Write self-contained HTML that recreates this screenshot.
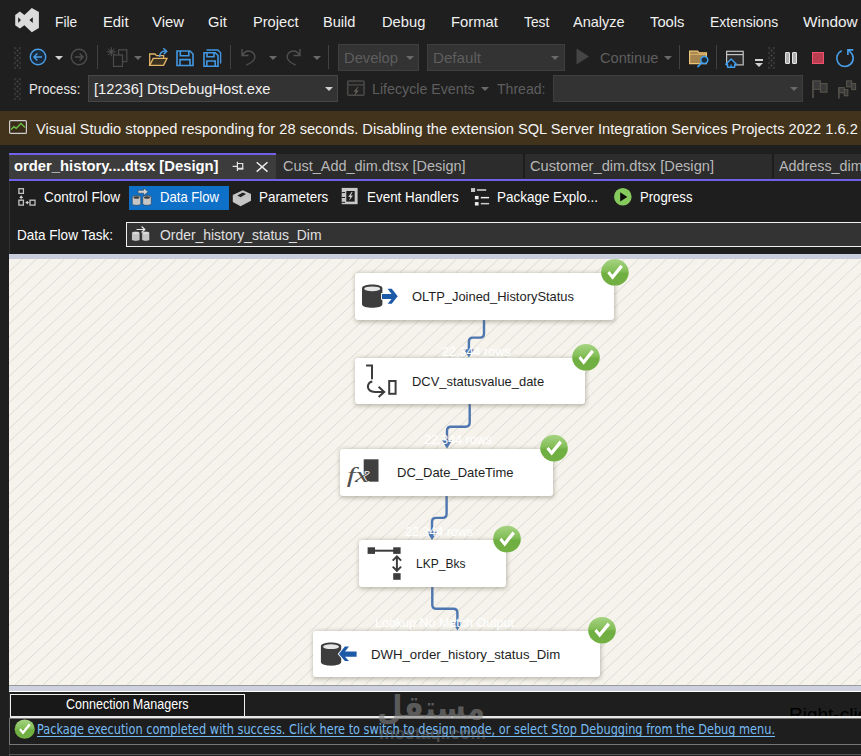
<!DOCTYPE html>
<html lang="en"><head><meta charset="utf-8"><title>order_history_status_Dim.dtsx [Design]</title>
<style>
*{box-sizing:border-box;margin:0;padding:0}
html,body{width:861px;height:756px;overflow:hidden;background:#1f1f1f;font-family:"Liberation Sans",sans-serif}
#app{position:relative;width:861px;height:756px;overflow:hidden;background:#1f1f1f}
.a{position:absolute}
.t{position:absolute;white-space:nowrap;transform-origin:0 50%;display:block}
.sep{position:absolute;width:1px;background:#424242}
.combo{position:absolute;background:#333333;border:1px solid #3f3f3f}
.arr{position:absolute;width:0;height:0;border-left:4px solid transparent;border-right:4px solid transparent;border-top:4px solid #d0d0d0}
.arr.d{border-top-color:#696969}
.grip{position:absolute;width:7px;background-image:radial-gradient(circle,#505050 0.75px,transparent 1.15px),radial-gradient(circle,#505050 0.75px,transparent 1.15px);background-size:5px 5px;background-position:-1.5px -1.5px,1px 1px}
.node{position:absolute;background:#fff;border-radius:3px;box-shadow:0.5px 1px 4px 0.5px rgba(110,105,90,.42)}
svg{position:absolute;overflow:visible}
</style></head><body><div id="app">

<!-- ===== menu bar ===== -->
<svg style="left:0;top:0" width="48" height="40" viewBox="0 0 48 40"><path fill="#dbdbdb" fill-rule="evenodd" d="M15.200 14.900L19.900 11.500L24.400 14.900L31.800 8L38.900 12V28L31.800 32.200L24.400 25.300L19.900 28.400L15.200 25.300Z M18.200 17.200V23L20.900 20.100Z M32.800 17.200V23L29.400 20.100Z"/></svg>

<!-- ===== toolbar row 1 ===== -->
<div class="grip" style="left:14px;top:47px;height:22px"></div>
<svg style="left:28.500px;top:47.600px" width="18" height="18" viewBox="0 0 18 18"><circle cx="9" cy="9" r="7.7" fill="#1b2a3a" stroke="#4a9ee8" stroke-width="1.4"/><path d="M13 9H5.2M8.4 5.6L5 9l3.4 3.4" fill="none" stroke="#4a9ee8" stroke-width="1.4"/></svg>
<div class="arr" style="left:55px;top:56px"></div>
<svg style="left:69.500px;top:48px" width="18" height="18" viewBox="0 0 18 18"><circle cx="9" cy="9" r="7.7" fill="none" stroke="#4d4d4d" stroke-width="1.4"/><path d="M5 9h7.8M9.6 5.6L13 9l-3.4 3.4" fill="none" stroke="#4d4d4d" stroke-width="1.4"/></svg>
<div class="sep" style="left:97px;top:45px;height:24px"></div>
<svg style="left:0;top:0" width="300" height="75"><g fill="none" stroke="#4c4c4c" stroke-width="1.200"><rect x="118.600" y="49.800" width="8.200" height="11.800"/><rect x="113.500" y="55" width="9" height="11.400" fill="#1f1f1f"/><path d="M111.300 47.300V56.300M106.800 51.800H115.800M108.100 48.600L114.500 55M114.500 48.600L108.100 55" stroke-width="0.900" stroke="#585858"/></g></svg>
<div class="arr d" style="left:134px;top:56px"></div>
<svg style="left:0;top:0" width="300" height="75"><g fill="none" stroke-width="1.300"><path d="M149.700 65.400V54H155L156.500 55.600H163.600V58.200" stroke="#e2b566"/><path d="M149.700 65.400L153.200 58.400H167L163.600 65.400Z" stroke="#e2b566" fill="#3b321f"/><path d="M159.600 57C159.800 53 161.500 50.800 165.800 51" stroke="#4a9ee8" stroke-width="1.500"/><path d="M163.300 48.300L166.700 51.200L163.700 54.200" stroke="#4a9ee8" stroke-width="1.500"/></g></svg>
<svg style="left:0;top:0" width="300" height="75"><path d="M177 51H190L193 54V65.500H177Z M180.300 51V55.800H188.800V51 M180 65.500V59.600H190V65.500" fill="none" stroke="#4297e2" stroke-width="1.600"/></svg>
<svg style="left:0;top:0" width="300" height="75"><g fill="none" stroke="#4297e2"><path d="M206.500 50H217.800L220.600 52.800V63.500" stroke-width="1.400"/><path d="M204 52.700H215.200L218 55.500V66.200H204Z M207 52.700V56.800H214V52.700 M206.800 66.200V61H215.200V66.200" stroke-width="1.600"/></g></svg>
<div class="sep" style="left:230px;top:45px;height:24px"></div>
<svg style="left:240px;top:48px" width="18" height="18" viewBox="0 0 18 18"><path d="M2 1v6.5h6.5M2.3 7.2C4 4.2 7 2.6 10 3.2c3.500.8 5.500 4 4.600 7.200C13.800 13 11 15 6.500 17" fill="none" stroke="#505050" stroke-width="1.4"/></svg>
<div class="arr d" style="left:269px;top:56px"></div>
<svg style="left:283.700px;top:48px" width="18" height="18" viewBox="0 0 18 18"><path d="M16 1v6.500H9.500M15.700 7.200C14 4.200 11 2.600 8 3.200C4.500 4 2.500 7.200 3.400 10.400C4.200 13 7 15 11.500 17" fill="none" stroke="#505050" stroke-width="1.4"/></svg>
<div class="arr d" style="left:313px;top:56px"></div>
<div class="sep" style="left:328px;top:45px;height:24px"></div>
<div class="combo" style="left:338px;top:44px;width:81px;height:27px"></div>
<div class="arr d" style="left:406px;top:56px"></div>
<div class="combo" style="left:427px;top:44px;width:138px;height:27px"></div>
<div class="arr d" style="left:551px;top:56px"></div>
<svg style="left:576px;top:48px" width="14" height="17" viewBox="0 0 14 17"><path d="M0.500 0.500L13 8.500L0.500 16.500z" fill="#454545"/></svg>
<div class="arr d" style="left:664px;top:56px"></div>
<div class="sep" style="left:679px;top:45px;height:24px"></div>
<svg style="left:0;top:0" width="861" height="75"><path d="M689.600 51.100H697.600L699 52.800H706.400V63.700H689.600Z" fill="#a5854d" stroke="#eec578" stroke-width="1.200"/><path d="M689.600 54.300H706" stroke="#eec578" stroke-width="0.800"/><circle cx="704.300" cy="60.100" r="3.500" fill="#1d2a38" stroke="#3fa0f0" stroke-width="1.500"/><path d="M701.800 62.700L697.500 67.200" stroke="#3fa0f0" stroke-width="1.700"/></svg>
<div class="sep" style="left:716px;top:45px;height:24px"></div>
<svg style="left:0;top:0" width="861" height="75"><rect x="726.600" y="51.300" width="16.600" height="13.600" fill="#2c2c2c" stroke="#c2c2c2" stroke-width="1.200"/><path d="M726.600 54.600H743.200" stroke="#c2c2c2" stroke-width="1.200"/><path d="M725.800 64.300L731.100 59L736.400 64.300H734.700V67.300H727.600V64.300Z" fill="#1f1f1f" stroke="#3fa0f0" stroke-width="1.400" stroke-linejoin="round"/><path d="M731.100 67.300V64.600" stroke="#3fa0f0" stroke-width="1.200"/></svg>
<div class="a" style="left:755px;top:59px;width:8px;height:2px;background:#d0d0d0"></div>
<div class="arr" style="left:755px;top:63px"></div>
<div class="grip" style="left:768px;top:47px;height:22px"></div>
<div class="a" style="left:785px;top:52px;width:5px;height:12px;border:1px solid #e4e4e4;background:#b0b0b0;border-radius:1px"></div>
<div class="a" style="left:792px;top:52px;width:5px;height:12px;border:1px solid #e4e4e4;background:#b0b0b0;border-radius:1px"></div>
<div class="a" style="left:812px;top:52px;width:12px;height:12px;border:1px solid #f0546c;background:#ba3d50"></div>
<svg style="left:0;top:0" width="861" height="80"><g fill="none" stroke="#4aa0ea" stroke-width="1.600"><path d="M841.700 50.700A8.200 8.200 0 1 0 850.300 52L848.300 50.200"/><path d="M853.300 49.900H847.900V55"/></g></svg>

<!-- ===== toolbar row 2 ===== -->
<div class="grip" style="left:14px;top:78px;height:22px"></div>
<div class="combo" style="left:88px;top:75px;width:250px;height:27px;border-color:#464646"></div>
<div class="arr" style="left:325px;top:87px"></div>
<svg style="left:0;top:0" width="400" height="106"><rect x="347.700" y="81.100" width="16.400" height="14.100" rx="1" fill="#242220" stroke="#4a4a4a" stroke-width="1.500"/><path d="M347.700 84.900H364.100" stroke="#4a4a4a" stroke-width="1.300"/><path d="M357.600 87L353.600 91.800H355.800L354 96.200L358.800 90.400H356.400L358.400 87Z" fill="#62625a"/></svg>
<div class="arr d" style="left:481px;top:87px"></div>
<div class="combo" style="left:553px;top:75px;width:250px;height:27px"></div>
<div class="arr d" style="left:790px;top:87px"></div>
<svg style="left:0;top:0" width="861" height="106"><g fill="#3a3a3a" stroke="#55534a" stroke-width="1.100"><path d="M813 80.500V98" stroke-width="1.600"/><rect x="813.200" y="80.900" width="7.200" height="8.400"/><rect x="820.400" y="83.600" width="6.600" height="8.600"/></g></svg>
<svg style="left:0;top:0" width="861" height="106"><g fill="#3a3a3a" stroke="#55534a" stroke-width="1.100"><rect x="846.600" y="80.900" width="5.100" height="5.900"/><rect x="851.700" y="83.600" width="3.900" height="6"/><path d="M838.900 87.200V98.600" stroke-width="1.600"/><rect x="839.100" y="87.600" width="5.200" height="5.200"/><rect x="844.300" y="89.600" width="3.500" height="6.200"/></g></svg>

<!-- ===== info bar ===== -->
<div class="a" style="left:0;top:111px;width:861px;height:34px;background:#42331c"></div>
<svg style="left:9px;top:120px" width="18" height="14" viewBox="0 0 18 14"><rect x="0.600" y="0.600" width="16.800" height="12.800" rx="1" fill="#3a2d18" stroke="#cfcfcf" stroke-width="1.200"/><path d="M2 9.500l3-2.800 2.200 1.600L12 3.500l4 4" fill="none" stroke="#6cc24a" stroke-width="1.300"/></svg>

<!-- ===== document tabs ===== -->
<div class="a" style="left:9px;top:181px;width:852px;height:575px;background:#1e1e1e;border-left:1px solid #333"></div>
<div class="a" style="left:9px;top:154px;width:852px;height:25px;background:#2c2c2c"></div>
<div class="a" style="left:9px;top:153px;width:267px;height:28px;background:#3c3c3c;border-top:2px solid #7160e8"></div>
<div class="a" style="left:9px;top:178.500px;width:852px;height:2.500px;background:#7160e8"></div>
<div class="a" style="left:523px;top:154px;width:1.500px;height:24px;background:#1c1c1c"></div>
<div class="a" style="left:772.200px;top:154px;width:1.500px;height:24px;background:#1c1c1c"></div>
<svg style="left:0;top:0" width="300" height="185"><g fill="none" stroke="#e4e4e4" stroke-width="1.200"><path d="M232.600 166.400H237.300M237.400 161.700V171M237.400 163.500H242.700V169.200"/><path d="M237.400 168.700H243.300" stroke-width="1.900"/></g></svg>
<svg style="left:0;top:0" width="300" height="185"><path d="M256.700 162.200L267.500 171.600M267.500 162.200L256.700 171.600" stroke="#ececec" stroke-width="1.500"/></svg>

<!-- ===== designer toolbar ===== -->
<svg style="left:0;top:0" width="60" height="215"><g fill="none" stroke="#c2c2c2" stroke-width="1.300"><rect x="18.900" y="188.700" width="4.500" height="4.700"/><rect x="18.900" y="200.200" width="4.500" height="4.900"/><rect x="30" y="200.200" width="5" height="4.900"/></g><path d="M21.200 195.300L23.200 198H19.200Z M25.200 202.600L27.900 200.700V204.500Z" fill="#d8d8d8"/><path d="M21.200 197.500V199.500M27.500 202.600H29.500" stroke="#c2c2c2" stroke-width="1"/></svg>
<div class="a" style="left:129px;top:186px;width:100px;height:24px;background:#0f70c8"></div>
<svg style="left:0;top:0" width="300" height="250"><path d="M132.2 197.2C132.2 195.0 140.8 195.0 140.8 197.2V203.70000000000002C140.8 205.9 132.2 205.9 132.2 203.70000000000002Z" fill="#c6c6c6" stroke="#2c4a66" stroke-width="0.8"/><ellipse cx="136.5" cy="197.5" rx="3.10" ry="1.2" fill="#3a3a3a"/><path d="M142.7 197.2C142.7 195.0 151.3 195.0 151.3 197.2V203.70000000000002C151.3 205.9 142.7 205.9 142.7 203.70000000000002Z" fill="#c6c6c6" stroke="#2c4a66" stroke-width="0.8"/><ellipse cx="147.0" cy="197.5" rx="3.10" ry="1.2" fill="#3a3a3a"/><path d="M138 190.300H143.600V187.900L148.200 191.800L143.600 195.600V193.200H138Z" fill="#d2d2d2" stroke="#2c4a66" stroke-width="0.700"/></svg>
<svg style="left:0;top:0" width="861" height="215"><path d="M232.800 195.100L242.800 190.300L251 194V200.700L240.600 206.200L232.800 202.100Z" fill="#c6c6c6"/><path d="M237.300 195.500L242.800 192.500L246.100 194L240.600 197.300Z" fill="#222"/><path d="M232.800 195.100L240.600 198.900L251 194" fill="none" stroke="#b4b4b4" stroke-width="0.600"/></svg>
<svg style="left:0;top:0" width="861" height="215"><rect x="341.700" y="187.900" width="15.900" height="16.300" fill="#c8c8c8"/><rect x="346.300" y="191" width="8.400" height="10.600" fill="#1e1e1e"/><path d="M341.700 192.600h3.400M341.700 197.500h3.400M341.700 202.300h3.400" stroke="#1e1e1e" stroke-width="1"/><path d="M351.600 192L348.200 197H350.300L349.200 200.800L353 195.500H350.700L352.600 192Z" fill="#cfcfcf"/></svg>
<svg style="left:0;top:0" width="861" height="215"><rect x="471" y="188.100" width="4.100" height="3.900" fill="#c8c8c8"/><rect x="476.900" y="189" width="9.300" height="2" fill="#aaa"/><rect x="474.900" y="195.900" width="3.700" height="3.400" fill="#eee"/><rect x="480.800" y="196.900" width="8.300" height="1.500" fill="#eee"/><rect x="474.900" y="202.100" width="3.700" height="3.400" fill="#eee"/><rect x="480.800" y="202.900" width="8.300" height="1.500" fill="#ccc"/></svg>
<svg style="left:0;top:0" width="861" height="215"><circle cx="622.800" cy="196.800" r="8.800" fill="#86c95c"/><path d="M620.200 192.300V201.400L627.300 197Z" fill="#0c0c0c"/></svg>

<!-- ===== data flow task row ===== -->
<div class="a" style="left:126px;top:222px;width:760px;height:25px;background:#333;border:1px solid #f0f0f0"></div>
<svg style="left:0;top:0" width="300" height="250"><path d="M131.5 232.79999999999998C131.5 230.6 140 230.6 140 232.79999999999998V239.6C140 241.79999999999998 131.5 241.79999999999998 131.5 239.6Z" fill="#c4c4c4" stroke="#2a2a2a" stroke-width="0.8"/><ellipse cx="135.75" cy="233.1" rx="3.05" ry="1.2" fill="#dcdcdc"/><path d="M141.7 232.79999999999998C141.7 230.6 149.8 230.6 149.8 232.79999999999998V239.6C149.8 241.79999999999998 141.7 241.79999999999998 141.7 239.6Z" fill="#c4c4c4" stroke="#2a2a2a" stroke-width="0.8"/><ellipse cx="145.75" cy="233.1" rx="2.85" ry="1.2" fill="#dcdcdc"/><path d="M136.500 229.500H144.300M141.600 226.500L144.800 229.500L141.600 232.500" fill="none" stroke="#e8e8e8" stroke-width="1.200"/></svg>

<!-- ===== design surface ===== -->
<div class="a" style="left:9px;top:254px;width:852px;height:5px;background:#c9cddb"></div>
<div class="a" id="surface" style="left:9px;top:259px;width:852px;height:426px;background:#f5f3eb;overflow:hidden">
<svg style="left:0;top:0" width="852" height="426"><path d="M0.0 12.7L13.6 0.0M0.0 25.8L27.6 0.0M0.0 38.9L41.6 0.0M0.0 51.9L55.6 0.0M0.0 65.0L69.6 0.0M0.0 78.1L83.6 0.0M0.0 91.2L97.6 0.0M0.0 104.3L111.6 0.0M0.0 117.4L125.6 0.0M0.0 130.5L139.6 0.0M0.0 143.6L153.6 0.0M0.0 156.7L167.6 0.0M0.0 169.8L181.6 0.0M0.0 182.8L195.6 0.0M0.0 195.9L209.6 0.0M0.0 209.0L223.6 0.0M0.0 222.1L237.6 0.0M0.0 235.2L251.6 0.0M0.0 248.3L265.6 0.0M0.0 261.4L279.6 0.0M0.0 274.5L293.6 0.0M0.0 287.6L307.6 0.0M0.0 300.7L321.6 0.0M0.0 313.7L335.6 0.0M0.0 326.8L349.6 0.0M0.0 339.9L363.6 0.0M0.0 353.0L377.6 0.0M0.0 366.1L391.6 0.0M0.0 379.2L405.6 0.0M0.0 392.3L419.6 0.0M0.0 405.4L433.6 0.0M0.0 418.5L447.6 0.0M5.9 426.0L461.6 0.0M19.9 426.0L475.6 0.0M33.9 426.0L489.6 0.0M47.9 426.0L503.6 0.0M61.9 426.0L517.6 0.0M75.9 426.0L531.6 0.0M89.9 426.0L545.6 0.0M103.9 426.0L559.6 0.0M117.9 426.0L573.6 0.0M131.9 426.0L587.6 0.0M145.9 426.0L601.6 0.0M159.9 426.0L615.6 0.0M173.9 426.0L629.6 0.0M187.9 426.0L643.6 0.0M201.9 426.0L657.6 0.0M215.9 426.0L671.6 0.0M229.9 426.0L685.6 0.0M243.9 426.0L699.6 0.0M257.9 426.0L713.6 0.0M271.9 426.0L727.6 0.0M285.9 426.0L741.6 0.0M299.9 426.0L755.6 0.0M313.9 426.0L769.6 0.0M327.9 426.0L783.6 0.0M341.9 426.0L797.6 0.0M355.9 426.0L811.6 0.0M369.9 426.0L825.6 0.0M383.9 426.0L839.6 0.0M397.9 426.0L852.0 1.5M411.9 426.0L852.0 14.5M425.9 426.0L852.0 27.6M439.9 426.0L852.0 40.7M453.9 426.0L852.0 53.8M467.9 426.0L852.0 66.9M481.9 426.0L852.0 80.0M495.9 426.0L852.0 93.1M509.9 426.0L852.0 106.2M523.9 426.0L852.0 119.3M537.9 426.0L852.0 132.4M551.9 426.0L852.0 145.4M565.9 426.0L852.0 158.5M579.9 426.0L852.0 171.6M593.9 426.0L852.0 184.7M607.9 426.0L852.0 197.8M621.9 426.0L852.0 210.9M635.9 426.0L852.0 224.0M649.9 426.0L852.0 237.1M663.9 426.0L852.0 250.2M677.9 426.0L852.0 263.3M691.9 426.0L852.0 276.3M705.9 426.0L852.0 289.4M719.9 426.0L852.0 302.5M733.9 426.0L852.0 315.6M747.9 426.0L852.0 328.7M761.9 426.0L852.0 341.8M775.9 426.0L852.0 354.9M789.9 426.0L852.0 368.0M803.9 426.0L852.0 381.1M817.9 426.0L852.0 394.2M831.9 426.0L852.0 407.2M845.9 426.0L852.0 420.3" fill="none" stroke="#d9d8d3" stroke-width="0.900"/></svg>
</div>

<!-- connectors -->
<svg style="left:0;top:0" width="861" height="756"><g fill="none" stroke="#4e76b0" stroke-width="2.400">
<path d="M484 320V333.500Q484 337.600 480 337.600H473Q468.900 337.600 468.900 341.700V352"/>
<path d="M469.700 404V422.600Q469.700 426.700 465.600 426.700H451.100Q447 426.700 447 430.800V442"/>
<path d="M446.600 496V513.800Q446.600 517.900 442.500 517.900H436.100Q432 517.900 432 522V534"/>
<path d="M432.300 587V604.700Q432.300 608.800 436.400 608.800H453.300Q457.400 608.800 457.400 612.900V624"/>
</g><g fill="#4e76b0"><path d="M463.900 349.200h10l-5 8.400z"/><path d="M442 440.400h10l-5 8.400z"/><path d="M427 531.800h10l-5 8.400z"/><path d="M452.400 622.200h10l-5 8.400z"/></g></svg>
<!-- nodes -->
<div class="node" style="left:354.9px;top:272.8px;width:258.85px;height:46.80px"></div>
<div class="node" style="left:354.9px;top:357.6px;width:229.90px;height:46.50px"></div>
<div class="node" style="left:339.9px;top:449.0px;width:213.50px;height:46.60px"></div>
<div class="node" style="left:358.9px;top:540.2px;width:147.10px;height:46.40px"></div>
<div class="node" style="left:313.4px;top:630.9px;width:287.10px;height:46.60px"></div>
<!-- node icons -->
<svg style="left:0;top:0" width="861" height="756"><path d="M362 288.20000000000005C362 283.40000000000003 382.4 283.40000000000003 382.4 288.20000000000005V304.2C382.4 309.0 362 309.0 362 304.2Z" fill="#3d3d3d"/><ellipse cx="372.2" cy="288.8" rx="8.00" ry="2.400" fill="#e6e6e6"/><path d="M382 293.900H391.600L387.600 288.700H391.700L397.700 296.300L391.700 303.800H387.600L391.600 298.900H382Z" fill="#1c5aa8" stroke="#fff" stroke-width="1.800" paint-order="stroke"/><g fill="none" stroke="#3d3d3d" stroke-width="2"><path d="M366.100 365.400H372V379.200"/><path d="M372.300 381.400C367.500 382.200 366.500 388 370 390.600C371.500 391.700 373 391.900 375 391.900H383.500"/><path d="M378.600 386.700L384.200 391.900L378.600 397.100"/><rect x="389.200" y="381" width="6.400" height="12.800"/></g><rect x="363.700" y="459.300" width="14.800" height="22.400" fill="#404040"/><text transform="translate(346.800,482.300) scale(1.42,1)" font-family="'Liberation Serif',serif" font-style="italic" font-size="22" fill="#505050" stroke="#fff" stroke-width="1.300" paint-order="stroke" letter-spacing="-0.300">fx</text><g fill="#3d3d3d"><rect x="367.600" y="547.300" width="7.400" height="6.600"/><rect x="393.200" y="547.300" width="7.400" height="6.600"/><rect x="393.200" y="573.200" width="7.400" height="6.600"/><rect x="374" y="549.700" width="20" height="2"/></g><g fill="none" stroke="#3d3d3d" stroke-width="2"><path d="M396.900 556.500V570.600M392.700 560.600L396.900 556.400L401.100 560.600M392.700 566.600L396.900 570.800L401.100 566.600"/></g><path d="M320.9 646.1C320.9 641.3 341.2 641.3 341.2 646.1V662.1C341.2 666.9000000000001 320.9 666.9000000000001 320.9 662.1Z" fill="#3d3d3d"/><ellipse cx="331.04999999999995" cy="646.7" rx="7.95" ry="2.400" fill="#e6e6e6"/><path d="M356.600 651.600H345L349 646.600H344.900L338.900 653.900L344.900 661.100H349L345 656.700H356.600Z" fill="#1c5aa8" stroke="#fff" stroke-width="1.800" paint-order="stroke"/></svg>
<!-- check badges -->
<svg style="left:0;top:0" width="861" height="756"><defs><linearGradient id="gg" x1="0" y1="0" x2="0" y2="1"><stop offset="0" stop-color="#a6d482"/><stop offset="0.450" stop-color="#84be58"/><stop offset="0.550" stop-color="#6fae40"/><stop offset="1" stop-color="#72b044"/></linearGradient><g id="ck"><ellipse rx="13.800" ry="13.300" cy="0.200" fill="url(#gg)"/><path d="M-7.600 1.200L-5.400 -1L-2.500 2.600L5.600 -7.400L8 -5L-2.300 7.600Z" fill="#fff"/></g></defs><use href="#ck" x="614.9" y="272.1"/><use href="#ck" x="586" y="357.1"/><use href="#ck" x="554" y="447.9"/><use href="#ck" x="507" y="538.8"/><use href="#ck" x="602" y="630"/><g transform="translate(24.700,729) scale(.73)"><use href="#ck"/></g></svg>

<!-- ===== bottom ===== -->
<div class="a" style="left:9px;top:685px;width:852px;height:1px;background:#9a9a9a"></div>
<div class="a" style="left:9px;top:686px;width:852px;height:5px;background:#cdd1df"></div>
<div class="a" style="left:9px;top:691px;width:852px;height:1px;background:#fff"></div>
<div class="a" style="left:10px;top:694px;width:235px;height:23px;background:#181818;border:1px solid #f0f0f0"></div>
<div class="a" style="left:10px;top:716px;width:851px;height:1.500px;background:#e8e8e8"></div>
<div class="a" style="left:9px;top:718px;width:860px;height:27px;border:1px solid #777"></div>
<div class="a" style="left:9px;top:753.500px;width:860px;height:10px;border:1px solid #555"></div>
<div class="a" style="left:780px;top:694px;width:81px;height:22px;overflow:hidden"><span class="a" style="left:9px;top:11.300px;font-family:'Liberation Sans',sans-serif;font-size:19px;line-height:19px;color:#000;white-space:nowrap">Right-click here to add a new connection manager to the SSIS package.</span></div>

<span class="t" id="t0" style="left:54.5px;top:14.00px;font-size:15px;line-height:15px;color:#f0f0f0;font-family:'Liberation Sans', sans-serif;transform:scaleX(0.9184);">File</span>
<span class="t" id="t1" style="left:102.7px;top:14.00px;font-size:15px;line-height:15px;color:#f0f0f0;font-family:'Liberation Sans', sans-serif;transform:scaleX(0.9861);">Edit</span>
<span class="t" id="t2" style="left:152.2px;top:14.00px;font-size:15px;line-height:15px;color:#f0f0f0;font-family:'Liberation Sans', sans-serif;transform:scaleX(0.9922);">View</span>
<span class="t" id="t3" style="left:208.0px;top:14.00px;font-size:15px;line-height:15px;color:#f0f0f0;font-family:'Liberation Sans', sans-serif;transform:scaleX(0.9754);">Git</span>
<span class="t" id="t4" style="left:252.5px;top:14.00px;font-size:15px;line-height:15px;color:#f0f0f0;font-family:'Liberation Sans', sans-serif;transform:scaleX(0.9746);">Project</span>
<span class="t" id="t5" style="left:323.0px;top:14.00px;font-size:15px;line-height:15px;color:#f0f0f0;font-family:'Liberation Sans', sans-serif;transform:scaleX(0.9742);">Build</span>
<span class="t" id="t6" style="left:381.7px;top:14.00px;font-size:15px;line-height:15px;color:#f0f0f0;font-family:'Liberation Sans', sans-serif;transform:scaleX(0.9796);">Debug</span>
<span class="t" id="t7" style="left:451.0px;top:14.00px;font-size:15px;line-height:15px;color:#f0f0f0;font-family:'Liberation Sans', sans-serif;transform:scaleX(0.9891);">Format</span>
<span class="t" id="t8" style="left:523.7px;top:14.00px;font-size:15px;line-height:15px;color:#f0f0f0;font-family:'Liberation Sans', sans-serif;transform:scaleX(0.9195);">Test</span>
<span class="t" id="t9" style="left:573.0px;top:14.00px;font-size:15px;line-height:15px;color:#f0f0f0;font-family:'Liberation Sans', sans-serif;transform:scaleX(0.9686);">Analyze</span>
<span class="t" id="t10" style="left:649.5px;top:14.00px;font-size:15px;line-height:15px;color:#f0f0f0;font-family:'Liberation Sans', sans-serif;transform:scaleX(0.9848);">Tools</span>
<span class="t" id="t11" style="left:709.7px;top:14.00px;font-size:15px;line-height:15px;color:#f0f0f0;font-family:'Liberation Sans', sans-serif;transform:scaleX(0.9308);">Extensions</span>
<span class="t" id="t12" style="left:803.0px;top:14.00px;font-size:15px;line-height:15px;color:#f0f0f0;font-family:'Liberation Sans', sans-serif;transform:scaleX(1.0251);">Window</span>
<span class="t" id="t13" style="left:344.0px;top:49.80px;font-size:15px;line-height:15px;color:#5e5e5e;font-family:'Liberation Sans', sans-serif;transform:scaleX(0.9810);">Develop</span>
<span class="t" id="t14" style="left:433.0px;top:49.80px;font-size:15px;line-height:15px;color:#5e5e5e;font-family:'Liberation Sans', sans-serif;transform:scaleX(1.0099);">Default</span>
<span class="t" id="t15" style="left:599.5px;top:49.80px;font-size:15px;line-height:15px;color:#5e5e5e;font-family:'Liberation Sans', sans-serif;transform:scaleX(0.9742);">Continue</span>
<span class="t" id="t16" style="left:28.7px;top:81.00px;font-size:15px;line-height:15px;color:#e8e8e8;font-family:'Liberation Sans', sans-serif;transform:scaleX(0.8790);">Process:</span>
<span class="t" id="t17" style="left:94.0px;top:81.00px;font-size:15px;line-height:15px;color:#f0f0f0;font-family:'Liberation Sans', sans-serif;transform:scaleX(0.9799);">[12236] DtsDebugHost.exe</span>
<span class="t" id="t18" style="left:372.3px;top:81.00px;font-size:15px;line-height:15px;color:#5e5e5e;font-family:'Liberation Sans', sans-serif;transform:scaleX(0.9475);">Lifecycle Events</span>
<span class="t" id="t19" style="left:496.5px;top:81.00px;font-size:15px;line-height:15px;color:#5e5e5e;font-family:'Liberation Sans', sans-serif;transform:scaleX(0.9380);">Thread:</span>
<span class="t" id="t20" style="left:36.2px;top:120.70px;font-size:15px;line-height:15px;color:#f5f5f5;font-family:'Liberation Sans', sans-serif;transform:scaleX(0.9768);">Visual Studio stopped responding for 28 seconds. Disabling the extension SQL Server Integration Services Projects 2022 1.6.2</span>
<span class="t" id="t21" style="left:14.0px;top:158.30px;font-size:15px;line-height:15px;color:#ffffff;font-family:'Liberation Sans', sans-serif;transform:scaleX(0.9867);font-weight:bold;">order_history....dtsx [Design]</span>
<span class="t" id="t22" style="left:282.5px;top:158.30px;font-size:15px;line-height:15px;color:#b8b8b8;font-family:'Liberation Sans', sans-serif;transform:scaleX(0.9643);">Cust_Add_dim.dtsx [Design]</span>
<span class="t" id="t23" style="left:530.0px;top:158.30px;font-size:15px;line-height:15px;color:#b8b8b8;font-family:'Liberation Sans', sans-serif;transform:scaleX(0.9766);">Customer_dim.dtsx [Design]</span>
<span class="t" id="t24" style="left:779.0px;top:158.30px;font-size:15px;line-height:15px;color:#b8b8b8;font-family:'Liberation Sans', sans-serif;transform:scaleX(0.9550);">Address_dim.dtsx [Design]</span>
<span class="t" id="t25" style="left:44.0px;top:189.00px;font-size:15px;line-height:15px;color:#ffffff;font-family:'Liberation Sans', sans-serif;transform:scaleX(0.9026);">Control Flow</span>
<span class="t" id="t26" style="left:160.0px;top:189.00px;font-size:15px;line-height:15px;color:#ffffff;font-family:'Liberation Sans', sans-serif;transform:scaleX(0.8737);">Data Flow</span>
<span class="t" id="t27" style="left:258.7px;top:189.00px;font-size:15px;line-height:15px;color:#ffffff;font-family:'Liberation Sans', sans-serif;transform:scaleX(0.8938);">Parameters</span>
<span class="t" id="t28" style="left:366.7px;top:189.00px;font-size:15px;line-height:15px;color:#ffffff;font-family:'Liberation Sans', sans-serif;transform:scaleX(0.8951);">Event Handlers</span>
<span class="t" id="t29" style="left:496.5px;top:189.00px;font-size:15px;line-height:15px;color:#ffffff;font-family:'Liberation Sans', sans-serif;transform:scaleX(0.8972);">Package Explo...</span>
<span class="t" id="t30" style="left:640.0px;top:189.00px;font-size:15px;line-height:15px;color:#ffffff;font-family:'Liberation Sans', sans-serif;transform:scaleX(0.8745);">Progress</span>
<span class="t" id="t31" style="left:16.5px;top:227.30px;font-size:15px;line-height:15px;color:#ffffff;font-family:'Liberation Sans', sans-serif;transform:scaleX(0.9019);">Data Flow Task:</span>
<span class="t" id="t32" style="left:160.0px;top:227.30px;font-size:15px;line-height:15px;color:#e0e0e0;font-family:'Liberation Sans', sans-serif;transform:scaleX(0.9269);">Order_history_status_Dim</span>
<span class="t" id="t33" style="left:412.3px;top:290.20px;font-size:13px;line-height:13px;color:#1e1e1e;font-family:'Liberation Sans', sans-serif;transform:scaleX(0.9935);">OLTP_Joined_HistoryStatus</span>
<span class="t" id="t34" style="left:412.3px;top:374.70px;font-size:13px;line-height:13px;color:#1e1e1e;font-family:'Liberation Sans', sans-serif;transform:scaleX(0.9933);">DCV_statusvalue_date</span>
<span class="t" id="t35" style="left:396.9px;top:465.70px;font-size:13px;line-height:13px;color:#1e1e1e;font-family:'Liberation Sans', sans-serif;transform:scaleX(0.9995);">DC_Date_DateTime</span>
<span class="t" id="t36" style="left:416.3px;top:557.10px;font-size:13px;line-height:13px;color:#1e1e1e;font-family:'Liberation Sans', sans-serif;transform:scaleX(0.9255);">LKP_Bks</span>
<span class="t" id="t37" style="left:370.7px;top:647.50px;font-size:13px;line-height:13px;color:#1e1e1e;font-family:'Liberation Sans', sans-serif;transform:scaleX(1.0155);">DWH_order_history_status_Dim</span>
<span class="t" id="t38" style="left:441.6px;top:345.40px;font-size:13px;line-height:13px;color:#ffffff;font-family:'Liberation Sans', sans-serif;transform:scaleX(0.9671);">22,344 rows</span>
<span class="t" id="t39" style="left:423.8px;top:433.40px;font-size:13px;line-height:13px;color:#ffffff;font-family:'Liberation Sans', sans-serif;transform:scaleX(0.9587);">22,344 rows</span>
<span class="t" id="t40" style="left:404.5px;top:525.00px;font-size:13px;line-height:13px;color:#ffffff;font-family:'Liberation Sans', sans-serif;transform:scaleX(0.9601);">22,344 rows</span>
<span class="t" id="t41" style="left:374.7px;top:616.00px;font-size:13px;line-height:13px;color:#ffffff;font-family:'Liberation Sans', sans-serif;transform:scaleX(0.9617);">Lookup No Match Output</span>
<span class="t" id="t42" style="left:65.7px;top:697.23px;font-size:14.5px;line-height:14.5px;color:#ffffff;font-family:'Liberation Sans', sans-serif;transform:scaleX(0.8641);">Connection Managers</span>
<span class="t" id="t43" style="left:37.0px;top:721.53px;font-size:14.5px;line-height:14.5px;color:#76bcf4;font-family:'DejaVu Sans Condensed', 'DejaVu Sans', sans-serif;transform:scaleX(0.8681);text-decoration:underline;text-underline-offset:1.5px;text-decoration-thickness:1px;text-decoration-skip-ink:none;">Package execution completed with success. Click here to switch to design mode, or select Stop Debugging from the Debug menu.</span>
<!-- watermark -->
<div class="a" dir="rtl" lang="ar" style="left:376.500px;top:690.500px;font-family:'DejaVu Sans','Noto Sans CJK SC',sans-serif;font-weight:bold;font-size:30px;line-height:30px;color:rgba(132,132,132,.62);white-space:nowrap;transform-origin:0 0;transform:scale(.985,1.1)">مستقل</div>
<div class="a" id="wm2" style="left:379px;top:725px;font-family:'Liberation Sans',sans-serif;font-weight:bold;font-size:17px;line-height:18px;color:rgba(140,140,140,.4);white-space:nowrap;transform-origin:0 0;transform:scaleX(1.02)">mostaql.com</div>

</div></body></html>
